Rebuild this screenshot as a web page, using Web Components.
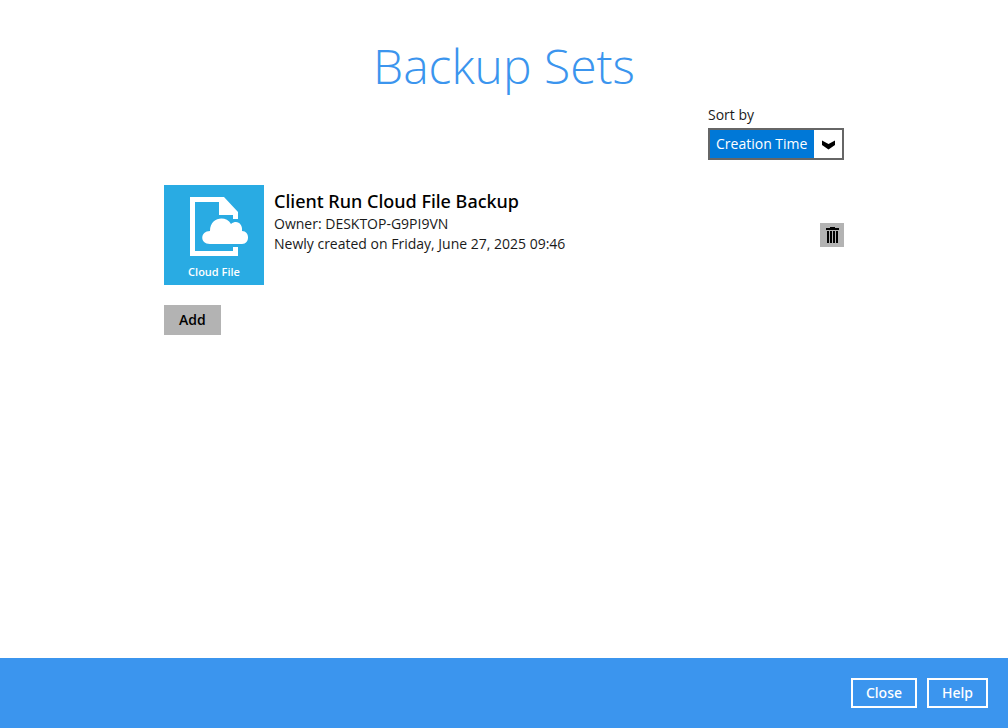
<!DOCTYPE html>
<html lang="en">
<head>
<meta charset="utf-8">
<meta name="viewport" content="width=device-width, initial-scale=1">
<title>Backup Sets</title>
<style>
  body { margin: 0; font-family: "Open Sans", "Noto Sans", sans-serif; font-size: 14px; line-height: 20px; color: #1a1a1a; background: #fff; }
</style>
</head>
<body>
<backup-page>
  <sort-picker slot="tools"></sort-picker>
  <backup-set>
    <span slot="name">Client Run Cloud File Backup</span>
    <span slot="owner">Owner: DESKTOP-G9PI9VN</span>
    <span slot="status">Newly created on Friday, June 27, 2025 09:46</span>
  </backup-set>
  <action-button slot="actions">Add</action-button>
  <action-button slot="footer" kind="outline">Close</action-button>
  <action-button slot="footer" kind="outline">Help</action-button>
</backup-page>
<script>
class BaseElement extends HTMLElement {
  constructor() {
    super();
    this.attachShadow({ mode: "open" }).innerHTML = this.constructor.markup;
  }
}

customElements.define("backup-page", class extends BaseElement {
  static markup = `
    <style>
      :host { display: flex; flex-direction: column; min-height: 100vh; }
      main { flex: 1; box-sizing: border-box; width: 100%; max-width: 720px; margin: 0 auto; padding: 32px 20px; }
      h1 { margin: 0; font-weight: 300; font-size: 48px; line-height: 68px; text-align: center; color: #3b95ee; }
      .tools { display: flex; justify-content: flex-end; margin-top: 4px; }
      .list { margin-top: 25px; }
      .actions { display: flex; margin-top: 20px; }
      footer { display: flex; justify-content: flex-end; gap: 10px; padding: 20px; background: #3b95ee; }
    </style>
    <main>
      <h1>Backup Sets</h1>
      <div class="tools"><slot name="tools"></slot></div>
      <div class="list"><slot></slot></div>
      <div class="actions"><slot name="actions"></slot></div>
    </main>
    <footer><slot name="footer"></slot></footer>`;
});

customElements.define("sort-picker", class extends BaseElement {
  static markup = `
    <style>
      :host { display: block; width: 136px; }
      label { display: block; line-height: 22px; margin-bottom: 2px; }
      .box { position: relative; border: 2px solid #666; }
      select { appearance: none; display: block; width: 100%; height: 28px; margin: 0; border: 0; border-radius: 0; outline: 0;
        padding: 0 28px 0 6px; font: inherit; color: #fff; background: linear-gradient(to left, #fff 28px, #0078d7 28px); }
      svg { position: absolute; top: 10px; right: 7px; width: 13px; height: 10px; pointer-events: none; }
    </style>
    <label for="sort">Sort by</label>
    <div class="box">
      <select id="sort"><option>Creation Time</option></select>
      <svg viewBox="0 0 13 10" aria-hidden="true"><path d="M0 0.500L6.500 4L13 0.500V5L6.500 9.500L0 5Z" fill="#000"/></svg>
    </div>`;
});

customElements.define("backup-set", class extends BaseElement {
  static markup = `
    <style>
      :host { display: flex; gap: 10px; }
      .tile { box-sizing: border-box; flex: none; display: flex; flex-direction: column; align-items: center; width: 100px; height: 100px;
        padding-top: 12px; background: #29abe3; color: #fff; font-weight: 600; font-size: 11px; line-height: 14px; }
      .tile svg { width: 100px; height: 60px; margin-bottom: 8px; }
      .info { flex: 1; display: flex; flex-direction: column; padding-top: 4px; }
      .name { margin-bottom: 1px; font-family: "Noto Sans", sans-serif; font-size: 18px; line-height: 24px; font-weight: 500; color: #000; }
      button { align-self: center; display: block; width: 24px; height: 24px; padding: 0; border: 0; background: #b3b3b3; }
      button svg { display: block; }
    </style>
    <div class="tile">
      <svg viewBox="0 12 100 60" aria-hidden="true">
        <path d="M26 12H60L74 27V34H69V30H55V17H31V66H69V62H74V71H26Z" fill="#fff"/>
        <path d="M46 59C35.500 59 36 46 46 46C46 32 62 30 67 39C73 34 79 39 78 46C86 46 86 59 78 59Z" fill="#fff"/>
      </svg>
      <span>Cloud File</span>
    </div>
    <div class="info">
      <div class="name"><slot name="name"></slot></div>
      <div><slot name="owner"></slot></div>
      <div><slot name="status"></slot></div>
    </div>
    <button type="button" aria-label="Delete">
      <svg width="24" height="24" viewBox="0 0 24 24" aria-hidden="true">
        <path d="M6 5H10V4H15V5H19V7H6ZM7 8H9V20H7ZM10 8H12V20H10ZM13 8H15V20H13ZM16 8H18V20H16Z" fill="#000"/>
      </svg>
    </button>`;
});

customElements.define("action-button", class extends BaseElement {
  static markup = `
    <style>
      :host { display: block; }
      button { display: block; margin: 0; height: 30px; padding: 0 13px; border: 2px solid #b3b3b3; background: #b3b3b3; color: #000;
        font: inherit; font-weight: 600; line-height: 20px; }
      :host([kind="outline"]) button { border-color: #fff; background: transparent; color: #fff; font-family: "Noto Sans", sans-serif; font-weight: 500; }
    </style>
    <button type="button"><slot></slot></button>`;
});
</script>
</body>
</html>
